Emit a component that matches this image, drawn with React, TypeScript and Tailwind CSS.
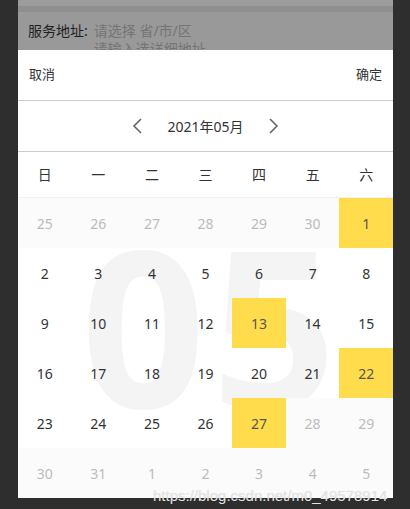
import React from "react";

type Cell = { d: number; other?: boolean; sel?: boolean };

const rows: Cell[][] = [
  [{ d: 25, other: true }, { d: 26, other: true }, { d: 27, other: true }, { d: 28, other: true }, { d: 29, other: true }, { d: 30, other: true }, { d: 1, sel: true }],
  [{ d: 2 }, { d: 3 }, { d: 4 }, { d: 5 }, { d: 6 }, { d: 7 }, { d: 8 }],
  [{ d: 9 }, { d: 10 }, { d: 11 }, { d: 12 }, { d: 13, sel: true }, { d: 14 }, { d: 15 }],
  [{ d: 16 }, { d: 17 }, { d: 18 }, { d: 19 }, { d: 20 }, { d: 21 }, { d: 22, sel: true }],
  [{ d: 23 }, { d: 24 }, { d: 25 }, { d: 26 }, { d: 27, sel: true }, { d: 28, other: true }, { d: 29, other: true }],
  [{ d: 30, other: true }, { d: 31, other: true }, { d: 1, other: true }, { d: 2, other: true }, { d: 3, other: true }, { d: 4, other: true }, { d: 5, other: true }],
];

const weekdays = ["日", "一", "二", "三", "四", "五", "六"];

export default function App() {
  return (
    <div
      className="relative w-[410px] h-[509px] overflow-hidden bg-[#2e2e2e] px-[18px]"
      style={{ fontFamily: '"Noto Sans", "Noto Sans CJK SC", sans-serif' }}
    >
      <div className="flex flex-col w-[375px]">
        {/* masked background page */}
        <div className="h-[50px] shrink-0 bg-[#999999] flex flex-col overflow-hidden">
          <div className="h-[6px] shrink-0 bg-[#9c9c9c]" />
          <div className="h-[6px] shrink-0 bg-[#8f8f8f]" />
          <div className="flex shrink-0 pl-[10px] pt-[10px] text-[14px] leading-[18px]">
            <span className="text-[#1f1f1f]">服务地址:</span>
            <div className="flex flex-col pl-[6px] text-[#747474]">
              <span>请选择 省/市/区</span>
              <span>请输入选详细地址</span>
            </div>
          </div>
        </div>

        {/* picker panel */}
        <div className="bg-white flex flex-col">
          <div className="h-[51px] flex items-center justify-between px-[11px] border-b border-[#cccccc] text-[13px] text-[#333333]">
            <span>取消</span>
            <span>确定</span>
          </div>
          <div className="h-[51px] flex items-center justify-center gap-[22px] border-b border-[#cccccc] text-[14px] text-[#333333]">
            <svg width="14" height="18" viewBox="0 0 14 18">
              <polyline points="10,2 3,9 10,16" fill="none" stroke="#666" strokeWidth="1.6" />
            </svg>
            <span>2021年05月</span>
            <svg width="14" height="18" viewBox="0 0 14 18">
              <polyline points="4,2 11,9 4,16" fill="none" stroke="#666" strokeWidth="1.6" />
            </svg>
          </div>
          <div className="h-[46px] grid grid-cols-7 items-center border-b border-[#f0f0f0] text-[14px] text-[#333333]">
            {weekdays.map((w) => (
              <div key={w} className="text-center">{w}</div>
            ))}
          </div>
          <div className="relative">
            <div className="absolute left-[63px] top-[16px] pointer-events-none select-none">
              <span className="block text-[218px] leading-[220px] font-bold text-[#f4f4f4] tracking-[6px]">05</span>
            </div>
            <div className="relative flex flex-col">
              {rows.map((r, i) => (
                <div key={i} className="grid grid-cols-7 h-[50px]">
                  {r.map((c, j) => (
                    <div
                      key={j}
                      className={
                        "flex items-center justify-center text-[14px] " +
                        (c.sel
                          ? "bg-[#ffdc4b] text-[#555555]"
                          : c.other
                          ? "bg-[#fbfbfb] text-[#bbbbbb]"
                          : "text-[#333333]")
                      }
                    >
                      {c.d}
                    </div>
                  ))}
                </div>
              ))}
            </div>
          </div>
        </div>
      </div>

      <div
        className="absolute left-[153px] top-[485px] text-[15px] text-[#e6e6e6]"
        style={{ fontFamily: '"Liberation Sans", Arial, sans-serif', textShadow: "0 0 1px rgba(0,0,0,0.12)" }}
      >
        https://blog.csdn.net/m0_49578914
      </div>
    </div>
  );
}
